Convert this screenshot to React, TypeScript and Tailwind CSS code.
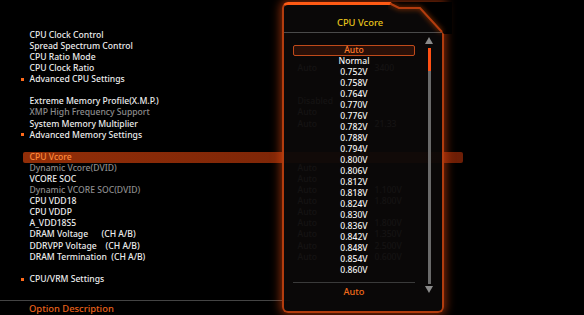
import React from 'react';

type Row = {
  label?: string;
  dim?: boolean;
  bullet?: boolean;
  active?: boolean;
  v1?: string;
  v2?: string;
};

const rows: Row[] = [
  { label: 'CPU Clock Control' },
  { label: 'Spread Spectrum Control' },
  { label: 'CPU Ratio Mode' },
  { label: 'CPU Clock Ratio', v1: 'Auto', v2: '3400' },
  { label: 'Advanced CPU Settings', bullet: true },
  {},
  { label: 'Extreme Memory Profile(X.M.P.)', v1: 'Disabled' },
  { label: 'XMP High Frequency Support', dim: true, v1: 'Auto' },
  { label: 'System Memory Multiplier', v1: 'Auto', v2: '21.33' },
  { label: 'Advanced Memory Settings', bullet: true },
  {},
  { label: 'CPU Vcore', active: true },
  { label: 'Dynamic Vcore(DVID)', dim: true, v1: 'Auto' },
  { label: 'VCORE SOC', v1: 'Auto' },
  { label: 'Dynamic VCORE SOC(DVID)', dim: true, v1: 'Auto', v2: '1.100V' },
  { label: 'CPU VDD18', v1: 'Auto', v2: '1.800V' },
  { label: 'CPU VDDP', v1: 'Auto' },
  { label: 'A_VDD18S5', v1: 'Auto', v2: '1.800V' },
  { label: 'DRAM Voltage      (CH A/B)', v1: 'Auto', v2: '1.350V' },
  { label: 'DDRVPP Voltage    (CH A/B)', v1: 'Auto', v2: '2.500V' },
  { label: 'DRAM Termination  (CH A/B)', v1: 'Auto', v2: '0.600V' },
  {},
  { label: 'CPU/VRM Settings', bullet: true },
];

const options = [
  'Normal',
  '0.752V', '0.758V', '0.764V', '0.770V', '0.776V', '0.782V', '0.788V', '0.794V',
  '0.800V', '0.806V', '0.812V', '0.818V', '0.824V', '0.830V', '0.836V', '0.842V',
  '0.848V', '0.854V', '0.860V',
];

function MenuRow({ row }: { row: Row }) {
  if (!row.label) return <div className="h-[11.1px]" />;

  if (row.active) {
    return (
      <div className="flex h-[11.1px] items-center">
        <div className="ml-[23px] flex h-[11px] w-[440px] items-center rounded-[2px] bg-[linear-gradient(90deg,#922e08,#7e2607_60%,#6c1e06)] pl-[6.5px] text-[#ff8a3a]">
          {row.label}
        </div>
      </div>
    );
  }

  return (
    <div className={`flex h-[11.1px] items-center whitespace-pre ${row.bullet ? 'pl-[20.5px]' : 'pl-[29.5px]'}`}>
      {row.bullet && <span className="mr-[6px] h-[3px] w-[3px] bg-[#ff6a1a]" />}
      <span className={`w-[268px] shrink-0 ${row.dim ? 'text-[#8c8c8c]' : 'text-[#ececec]'}`}>{row.label}</span>
      {/* values behind the popup, only faintly visible through it */}
      {row.v1 && <span className="w-[77px] shrink-0 text-[#b0b0b0]">{row.v1}</span>}
      {row.v2 && <span className="text-[#b0b0b0]">{row.v2}</span>}
    </div>
  );
}

function VcorePopup() {
  return (
    <div className="absolute left-[282px] top-[2px] flex h-[311px] w-[162px] flex-col rounded-b-[6px] rounded-tl-[6px] border-2 border-t-[3px] border-[#b23c0e] border-t-[#ff5a14] bg-[#0b0908]/[0.94] shadow-[0_0_10px_2px_rgba(255,80,16,0.5)]">
      {/* chamfered top-right corner */}
      <svg className="absolute right-[-10px] top-[-3px]" width="64" height="40" viewBox="0 0 64 40">
        <defs>
          <filter id="glow" x="-50%" y="-50%" width="200%" height="200%">
            <feGaussianBlur stdDeviation="2.5" />
          </filter>
        </defs>
        <polygon points="3,0 64,0 64,32 56,32 33,7 12,7 4,2" fill="#000" />
        <path d="M2,1.5 L11,6 L32,6 L54,30" stroke="#ff5a14" strokeOpacity="0.55" strokeWidth="3" fill="none" filter="url(#glow)" />
        <path d="M2,1.5 L11,6 L32,6 L54,30" stroke="#b23c0e" strokeWidth="2" fill="none" />
      </svg>

      <div className="flex h-[28px] shrink-0 items-center justify-center border-b border-[#4a4a4a] pr-[6px] pt-[8px] text-[9.4px] text-[#e8c41c]">
        CPU Vcore
      </div>

      <div className="flex flex-1 items-start">
        <div className="ml-[9px] w-[122px] pt-[11.5px]">
          <div className="flex h-[11px] items-center justify-center rounded-[2px] border border-[#c04a1a] bg-[#2a1008] text-[#ff7a2a]">
            Auto
          </div>
          {options.map((o) => (
            <div key={o} className="flex h-[11px] items-center justify-center text-[#f2f2f2]">
              {o}
            </div>
          ))}
          <div className="mt-[6px] border-t border-[#3a3a3a] pt-[3.5px]">
            <div className="flex h-[11px] items-center justify-center text-[9.2px] text-[#f06a1a]">Auto</div>
          </div>
        </div>

        <div className="ml-[10px] mt-[4px] flex w-[8px] flex-col items-center">
          <div className="h-0 w-0 border-x-[4px] border-b-[7px] border-x-transparent border-b-[#8a8a8a]" />
          <div className="mt-[4px] h-[23px] w-[3px] bg-[#ff5014]" />
          <div className="h-[213px] w-[3px] bg-[#6a6a6a]" />
          <div className="mt-[2px] h-0 w-0 border-x-[4px] border-t-[7px] border-x-transparent border-t-[#8a8a8a]" />
        </div>
      </div>
    </div>
  );
}

export default function App() {
  return (
    <div className="relative h-[315px] w-[584px] overflow-hidden bg-black font-['Noto_Sans',sans-serif] text-[8.6px] font-medium leading-none">
      <div className="pt-[29.5px]">
        {rows.map((r, i) => (
          <MenuRow key={i} row={r} />
        ))}
      </div>

      <div className="mt-[15px] w-[290px] border-t border-[#444]" />
      <div className="pl-[29px] pt-[3px] text-[9.4px] text-[#e8601a]">Option Description</div>

      <VcorePopup />
    </div>
  );
}
